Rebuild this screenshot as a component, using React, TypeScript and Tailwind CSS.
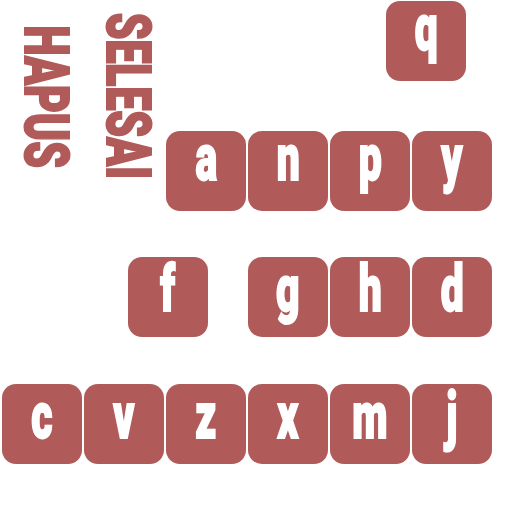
import React from "react";

const Tile: React.FC<{ ch: string; className?: string; low?: boolean }> = ({ ch, className = "", low }) => (
  <div
    className={`w-[80px] h-[80px] shrink-0 rounded-[14px] bg-[#b05b59] flex items-start justify-center ${className}`}
  >
    <span
      className={`text-white text-[65px] font-black leading-[0.8] scale-x-[0.63] [-webkit-text-stroke:2px_white] ${
        low ? "mt-[6px]" : "mt-[1px]"
      }`}
    >
      {ch}
    </span>
  </div>
);

const Label: React.FC<{ text: string; className?: string }> = ({ text, className = "" }) => (
  <div className={`w-[45px] flex items-center justify-center ${className}`}>
    <span className="[writing-mode:vertical-rl] text-[#b05b59] text-[61px] font-black leading-none scale-y-[0.7] [-webkit-text-stroke:2px_#b05b59]">
      {text}
    </span>
  </div>
);

export default function App() {
  return (
    <div className="w-[512px] h-[512px] bg-white overflow-hidden font-['Roboto',sans-serif]">
      <div className="h-[131px] flex items-start">
        <Label text="HAPUS" className="ml-[23px] mt-[26px] h-[141px]" />
        <Label text="SELESAI" className="ml-[37px] mt-[14px] h-[163px]" />
        <Tile ch="q" className="ml-auto mr-[46px] mt-[1px]" />
      </div>
      <div className="flex justify-end gap-[2px] pr-[20px]">
        {["a", "n", "p", "y"].map((c) => (
          <Tile key={c} ch={c} />
        ))}
      </div>
      <div className="mt-[46px] flex justify-end gap-[2px] pr-[20px]">
        <Tile ch="f" low className="mr-[38px]" />
        {["g", "h", "d"].map((c) => (
          <Tile key={c} ch={c} low />
        ))}
      </div>
      <div className="mt-[47px] flex gap-[2px] pl-[2px]">
        {["c", "v", "z", "x", "m", "j"].map((c) => (
          <Tile key={c} ch={c} low />
        ))}
      </div>
    </div>
  );
}
